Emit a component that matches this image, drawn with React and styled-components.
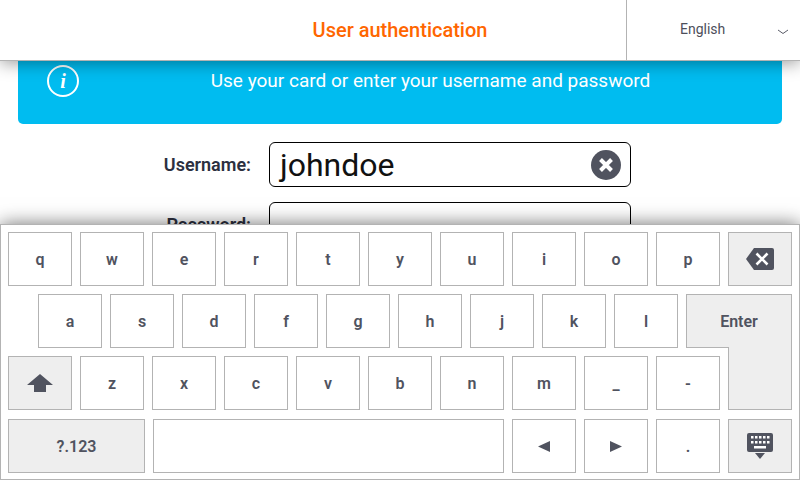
import React from "react";
import styled, { createGlobalStyle } from "styled-components";

const Global = createGlobalStyle`
  html, body { margin: 0; padding: 0; background: #fff; }
  * { box-sizing: border-box; }
`;

const Screen = styled.div`
  position: relative;
  width: 800px;
  height: 480px;
  overflow: hidden;
  background: #fff;
  font-family: Roboto, "Liberation Sans", sans-serif;
`;

const Header = styled.header`
  position: relative;
  z-index: 2;
  display: flex;
  height: 61px;
  background: #fff;
  border-bottom: 1px solid #b3b3b3;
  box-shadow: 0 2px 16px rgba(0, 0, 0, 0.4);
`;

const Title = styled.h1`
  flex: 1;
  margin: 0;
  text-align: center;
  line-height: 60px;
  font-size: 20px;
  font-weight: 500;
  color: #ff6600;
  padding-left: 174px;
`;

const Language = styled.div`
  width: 174px;
  display: flex;
  align-items: center;
  border-left: 1px solid #b3b3b3;
  padding-left: 53px;
  font-size: 14px;
  color: #4d4f5b;
`;

const LanguageName = styled.span`
  flex: 1;
  margin-top: -2px;
`;

const Chevron = styled.svg`
  width: 12px;
  height: 6px;
  margin-right: 11px;
  margin-top: 3px;
`;

const Banner = styled.section`
  display: flex;
  margin: 0 18px;
  height: 63px;
  padding: 4px 0 0 29px;
  background: #00bcf0;
  border-radius: 0 0 5px 5px;
  color: #fff;
`;

const InfoIcon = styled.div`
  width: 32px;
  height: 32px;
  border: 2px solid #fff;
  border-radius: 50%;
  display: flex;
  align-items: center;
  justify-content: center;
  font-family: "Liberation Serif", serif;
  font-style: italic;
  font-weight: 700;
  font-size: 20px;
`;

const BannerText = styled.div`
  flex: 1;
  text-align: center;
  font-size: 19px;
  font-weight: 450;
  line-height: 24px;
  padding-top: 4px;
`;

const Form = styled.form`
  display: flex;
  flex-direction: column;
  gap: 15px;
  padding-top: 18px;
`;

const Field = styled.div`
  display: flex;
  align-items: center;
  gap: 18px;
`;

const Label = styled.label`
  width: 251px;
  text-align: right;
  font-size: 18px;
  font-weight: 600;
  color: #2c3040;
`;

const Input = styled.div`
  position: relative;
  display: flex;
  align-items: center;
  width: 362px;
  height: 45px;
  padding: 0 10px;
  border: 1px solid #000;
  border-radius: 6px;
  font-size: 32px;
  color: #111;
`;

const ClearIcon = styled.svg`
  position: absolute;
  right: 9px;
  top: 7px;
  width: 30px;
  height: 30px;
`;

const Keyboard = styled.div`
  position: absolute;
  z-index: 3;
  left: 0;
  right: 0;
  top: 224px;
  height: 256px;
  display: flex;
  flex-direction: column;
  gap: 8px;
  padding: 7px;
  background: #fff;
  border: 1px solid #b3b3b3;
  box-shadow: 0 0 18px rgba(0, 0, 0, 0.55);
`;

const Row = styled.div`
  display: flex;
  gap: 8px;
  padding-left: ${(p) => p.$indent || 0}px;
  margin-top: ${(p) => p.$offset || 0}px;
`;

const Key = styled.div`
  flex: none;
  width: ${(p) => p.$w || 64}px;
  height: 54px;
  display: flex;
  align-items: center;
  justify-content: center;
  border: 1px solid #b3b3b3;
  background: ${(p) => (p.$fn ? "#eeeeee" : "#fff")};
  color: #50535f;
  font-size: 16px;
  font-weight: 600;
  padding-top: 1px;
`;

const EnterBottom = styled.div`
  position: relative;
  z-index: 1;
  flex: none;
  width: 64px;
  height: 63px;
  margin-top: -9px;
  background: #eeeeee;
  border: 1px solid #b3b3b3;
  border-top: none;
`;

const KeyGlyph = styled.svg`
  display: block;
  margin-top: -1px;
  fill: #50535f;
`;

const row1 = ["q", "w", "e", "r", "t", "y", "u", "i", "o", "p"];
const row2 = ["a", "s", "d", "f", "g", "h", "j", "k", "l"];
const row3 = ["z", "x", "c", "v", "b", "n", "m", "_", "-"];

export default function App() {
  return (
    <Screen>
      <Global />
      <Header>
        <Title>User authentication</Title>
        <Language>
          <LanguageName>English</LanguageName>
          <Chevron viewBox="0 0 12 6">
            <path d="M1 1l5 3.500L11 1" fill="none" stroke="#5a5c68" strokeWidth="1" />
          </Chevron>
        </Language>
      </Header>
      <Banner>
        <InfoIcon>i</InfoIcon>
        <BannerText>Use your card or enter your username and password</BannerText>
      </Banner>
      <Form>
        <Field>
          <Label>Username:</Label>
          <Input>
            johndoe
            <ClearIcon viewBox="0 0 30 30">
              <circle cx="15" cy="15" r="15" fill="#50535f" />
              <path d="M9.500 9.500l11 11M20.500 9.500l-11 11" stroke="#fff" strokeWidth="4" strokeLinecap="butt" />
            </ClearIcon>
          </Input>
        </Field>
        <Field>
          <Label>Password:</Label>
          <Input />
        </Field>
      </Form>
      <Keyboard>
        <Row>
          {row1.map((k) => (
            <Key key={k}>{k}</Key>
          ))}
          <Key $fn>
            <KeyGlyph width="28" height="22" viewBox="0 0 28 22">
              <path d="M8 0h18a2 2 0 0 1 2 2v18a2 2 0 0 1-2 2H8L0 11z" />
              <path d="M10.500 5.500l11 11M21.500 5.500l-11 11" stroke="#fff" strokeWidth="2.600" fill="none" />
            </KeyGlyph>
          </Key>
        </Row>
        <Row $indent={30}>
          {row2.map((k) => (
            <Key key={k}>{k}</Key>
          ))}
          <Key $fn $w={106}>Enter</Key>
        </Row>
        <Row>
          <Key $fn>
            <KeyGlyph width="26" height="18" viewBox="0 0 26 18">
              <path d="M13 0l13 11h-7v7H7v-7H0z" />
            </KeyGlyph>
          </Key>
          {row3.map((k) => (
            <Key key={k}>{k}</Key>
          ))}
          <EnterBottom />
        </Row>
        <Row $offset={1}>
          <Key $fn $w={137}>?.123</Key>
          <Key $w={351} />
          <Key>
            <KeyGlyph width="12" height="11" viewBox="0 0 12 11">
              <path d="M12 0v11L0 5.500z" />
            </KeyGlyph>
          </Key>
          <Key>
            <KeyGlyph width="12" height="11" viewBox="0 0 12 11">
              <path d="M0 0v11l12-5.500z" />
            </KeyGlyph>
          </Key>
          <Key>.</Key>
          <Key $fn>
            <KeyGlyph width="26" height="26" viewBox="0 0 26 26">
              <path d="M2 0h22a2 2 0 0 1 2 2v15a2 2 0 0 1-2 2H2a2 2 0 0 1-2-2V2a2 2 0 0 1 2-2z" />
              <path d="M8 20h10l-5 6z" />
              <path
                fill="#fff"
                d="M4 3h2.500v2.500H4zM8 3h2.500v2.500H8zM12 3h2.500v2.500H12zM16 3h2.500v2.500H16zM20 3h2.500v2.500H20zM4 8h2.500v2.500H4zM8 8h2.500v2.500H8zM12 8h2.500v2.500H12zM16 8h2.500v2.500H16zM20 8h2.500v2.500H20zM7 13h12v2.500H7z"
              />
            </KeyGlyph>
          </Key>
        </Row>
      </Keyboard>
    </Screen>
  );
}
